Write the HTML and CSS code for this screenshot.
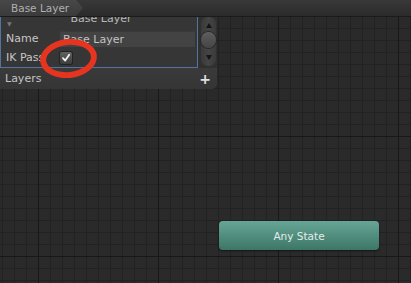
FILE: index.html
```html
<!DOCTYPE html>
<html>
<head>
<meta charset="utf-8">
<link rel="stylesheet" href="styles.css">
</head>
<body class="canvas">
  <header class="topbar">
    <span class="crumb">Base Layer</span>
  </header>
  <section class="layers-panel">
    <div class="layer-area">
      <div class="layer-box">
        <div class="layer-title">
          <span class="fold">▼</span>
          <span class="title-text">Base Layer</span>
        </div>
        <div class="field-row">
          <span class="label">Name</span>
          <span class="textfield">Base Layer</span>
        </div>
        <div class="field-row">
          <span class="label">IK Pass</span>
          <span class="checkbox">
            <svg viewBox="0 0 12 12" width="12" height="12"><path d="M3 6.2 L5.2 8.6 L9.2 2.8" fill="none" stroke="#f2f2f2" stroke-width="1.8" stroke-linecap="round" stroke-linejoin="round"/></svg>
          </span>
        </div>
      </div>
      <div class="scrollbar">
        <span class="arrow up"></span>
        <span class="thumb"></span>
        <span class="arrow down"></span>
      </div>
    </div>
    <div class="layers-footer">
      <span class="footer-label">Layers</span>
      <span class="plus">+</span>
    </div>
  </section>
  <div class="node any-state">Any State</div>
  <div class="highlight-ring"></div>
</body>
</html>
```
FILE: styles.css
```css
html, body {
  margin: 0;
  padding: 0;
}
.canvas {
  width: 411px;
  height: 283px;
  overflow: hidden;
  position: relative;
  font-family: "DejaVu Sans", "Liberation Sans", sans-serif;
  font-size: 11px;
  background-color: #2a2a2a;
  background-image:
    linear-gradient(to right, #181818 1px, transparent 1px),
    linear-gradient(to bottom, #181818 1px, transparent 1px),
    linear-gradient(to right, #222222 1px, transparent 1px),
    linear-gradient(to bottom, #222222 1px, transparent 1px);
  background-size: 120px 120px, 120px 120px, 12px 12px, 12px 12px;
  background-position: 38px 16px, 38px 16px, 2px 4px, 2px 4px;
}
.topbar {
  position: relative;
  z-index: 2;
  height: 16px;
  background: linear-gradient(#383838, #2b2b2b);
  border-bottom: 1px solid #1b1b1b;
  display: flex;
  align-items: stretch;
}
.crumb {
  display: flex;
  align-items: center;
  white-space: nowrap;
  width: 83px;
  box-sizing: border-box;
  padding-left: 11px;
  color: #b0b0b0;
  font-size: 10.5px;
  background: linear-gradient(#484848, #3a3a3a);
  clip-path: polygon(0 0, 76px 0, 83px 50%, 76px 100%, 0 100%);
}
.layers-panel {
  position: relative;
  z-index: 1;
  width: 217px;
  background: #373737;
  border-bottom-right-radius: 6px;
  display: flex;
  flex-direction: column;
}
.layer-area {
  display: flex;
  height: 51px;
  background: #303030;
}
.layer-box {
  width: 198px;
  margin-top: -8px;
  height: 59px;
  border: 1px solid #52749f;
  background: #363636;
  display: flex;
  flex-direction: column;
  box-sizing: border-box;
}
.layer-title {
  height: 19px;
  flex: none;
  display: flex;
  align-items: center;
  position: relative;
  color: #b8b8b8;
}
.fold {
  font-size: 6px;
  color: #777;
  margin-left: 6px;
  margin-top: 8px;
}
.title-text {
  position: absolute;
  left: 4px;
  right: 0;
  text-align: center;
  top: 2px;
}
.field-row {
  height: 19px;
  flex: none;
  display: flex;
  align-items: center;
}
.label {
  width: 54px;
  padding-left: 5px;
  color: #c6c6c6;
}
.textfield {
  flex: 1;
  margin-right: 2px;
  height: 15px;
  line-height: 15px;
  background: #434343;
  border-top: 1px solid #3a3a3a;
  padding-left: 3px;
  color: #c4c4c4;
}
.checkbox {
  width: 12px;
  height: 12px;
  border-radius: 2px;
  background: linear-gradient(#626262, #3c3c3c);
  box-shadow: 0 0 0 1px #222;
  display: flex;
}
.scrollbar {
  width: 15px;
  margin: 0 0 2px 3px;
  display: flex;
  flex-direction: column;
  align-items: center;
  background: linear-gradient(to right, #3a3a3a, #444444, #3a3a3a);
  border-radius: 7px;
  padding-top: 6px;
  box-sizing: border-box;
}
.arrow {
  width: 0;
  height: 0;
  border-left: 3px solid transparent;
  border-right: 3px solid transparent;
}
.arrow.up {
  border-bottom: 5px solid #151515;
}
.arrow.down {
  border-top: 5px solid #151515;
}
.thumb {
  width: 15px;
  height: 16px;
  margin: 4px 0 7px;
  border-radius: 50%;
  background: linear-gradient(#5e5e5e, #454545);
  box-shadow: 0 0 0 1px #262626;
}
.layers-footer {
  height: 21px;
  display: flex;
  align-items: center;
  justify-content: space-between;
  padding: 0 6px 0 5px;
  background: linear-gradient(#3a3a3a, #353535);
  border-bottom-right-radius: 6px;
  color: #c4c4c4;
}
.plus {
  font-size: 14px;
  font-weight: bold;
  color: #e0e0e0;
  line-height: 1;
}
.node {
  position: absolute;
  box-sizing: border-box;
  display: flex;
  align-items: center;
  justify-content: center;
}
.any-state {
  left: 219px;
  top: 221px;
  width: 160px;
  height: 29px;
  border-radius: 4px;
  background: linear-gradient(#67a696, #3c7667);
  box-shadow: 0 1px 2px rgba(0,0,0,0.5);
  color: #e2ece9;
  font-size: 10.5px;
}
.highlight-ring {
  position: absolute;
  z-index: 3;
  left: 40px;
  top: 39px;
  width: 57px;
  height: 39px;
  box-sizing: border-box;
  border: 6px solid #e5341f;
  border-radius: 50%;
  transform: rotate(-6deg);
}
```
